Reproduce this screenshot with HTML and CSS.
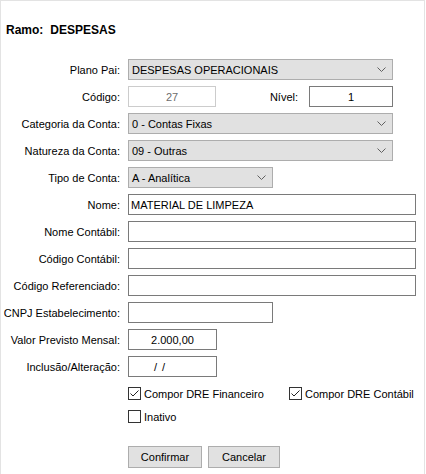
FILE: index.html
```html
<!DOCTYPE html>
<html lang="pt">
<head>
<meta charset="utf-8">
<link rel="stylesheet" href="styles.css">
</head>
<body>
<div class="window">
  <div class="title"><span>Ramo:</span><span class="title-value">DESPESAS</span></div>
  <div class="form">
    <label class="lbl">Plano Pai:</label>
    <div class="select w-full-select"><span>DESPESAS OPERACIONAIS</span><svg class="chev" width="9" height="5" viewBox="0 0 9 5"><path d="M0.5 0.5 L4.5 4.5 L8.5 0.5" fill="none" stroke="#606060" stroke-width="1"/></svg></div>

    <label class="lbl">Código:</label>
    <div class="split">
      <div class="input disabled w-codigo center">27</div>
      <label class="lbl nivel-lbl">Nível:</label>
      <div class="input w-nivel center">1</div>
    </div>

    <label class="lbl">Categoria da Conta:</label>
    <div class="select w-full-select"><span>0 - Contas Fixas</span><svg class="chev" width="9" height="5" viewBox="0 0 9 5"><path d="M0.5 0.5 L4.5 4.5 L8.5 0.5" fill="none" stroke="#606060" stroke-width="1"/></svg></div>

    <label class="lbl">Natureza da Conta:</label>
    <div class="select w-full-select"><span>09 - Outras</span><svg class="chev" width="9" height="5" viewBox="0 0 9 5"><path d="M0.5 0.5 L4.5 4.5 L8.5 0.5" fill="none" stroke="#606060" stroke-width="1"/></svg></div>

    <label class="lbl">Tipo de Conta:</label>
    <div class="select w-tipo"><span>A - Analítica</span><svg class="chev" width="9" height="5" viewBox="0 0 9 5"><path d="M0.5 0.5 L4.5 4.5 L8.5 0.5" fill="none" stroke="#606060" stroke-width="1"/></svg></div>

    <label class="lbl">Nome:</label>
    <div class="input w-full">MATERIAL DE LIMPEZA</div>

    <label class="lbl">Nome Contábil:</label>
    <div class="input w-full"></div>

    <label class="lbl">Código Contábil:</label>
    <div class="input w-full"></div>

    <label class="lbl">Código Referenciado:</label>
    <div class="input w-full"></div>

    <label class="lbl">CNPJ Estabelecimento:</label>
    <div class="input w-tipo"></div>

    <label class="lbl">Valor Previsto Mensal:</label>
    <div class="input w-valor center">2.000,00</div>

    <label class="lbl">Inclusão/Alteração:</label>
    <div class="input w-valor center date">/ /</div>
  </div>

  <div class="checks">
    <div class="check-row">
      <div class="check first"><span class="box"><svg width="11" height="11" viewBox="0 0 11 11"><path d="M1.5 5.5 L4 8 L9.5 2.5" fill="none" stroke="#222" stroke-width="1"/></svg></span><span>Compor DRE Financeiro</span></div>
      <div class="check"><span class="box"><svg width="11" height="11" viewBox="0 0 11 11"><path d="M1.5 5.5 L4 8 L9.5 2.5" fill="none" stroke="#222" stroke-width="1"/></svg></span><span>Compor DRE Contábil</span></div>
    </div>
    <div class="check-row">
      <div class="check"><span class="box"></span><span>Inativo</span></div>
    </div>
  </div>

  <div class="buttons">
    <div class="btn btn-confirm">Confirmar</div>
    <div class="btn btn-cancel">Cancelar</div>
  </div>
</div>
</body>
</html>
```

FILE: styles.css
```css
html, body {
  margin: 0;
  padding: 0;
  background: #ffffff;
}

body {
  font-family: "Liberation Sans", Arial, sans-serif;
  font-size: 11px;
  color: #000;
}

.window {
  width: 425px;
  height: 474px;
  box-sizing: border-box;
  border-top: 1px solid #e3e3e3;
  border-left: 1px solid #e3e3e3;
  border-right: 1px solid #e3e3e3;
  padding-top: 21px;
}

.title {
  padding-left: 5px;
  font-weight: bold;
  font-size: 12px;
  height: 16px;
  line-height: 16px;
  display: flex;
  gap: 7px;
}

.form {
  margin-top: 21px;
  display: grid;
  grid-template-columns: 114px 1fr;
  column-gap: 8px;
  row-gap: 6px;
  padding-left: 5px;
  grid-auto-rows: 21px;
}

.lbl {
  display: flex;
  align-items: center;
  justify-content: flex-end;
  white-space: nowrap;
  color: #000;
}

.split {
  display: flex;
  align-items: center;
  width: 265px;
}

.nivel-lbl {
  margin-left: auto;
  margin-right: 11px;
}

.select {
  box-sizing: border-box;
  height: 21px;
  background: #e1e1e1;
  border: 1px solid #adadad;
  display: flex;
  align-items: center;
  padding-left: 3px;
  padding-right: 6px;
  justify-content: space-between;
}

.chev {
  display: block;
}

.input {
  box-sizing: border-box;
  height: 21px;
  border: 1px solid #7a7a7a;
  background: #fff;
  display: flex;
  align-items: center;
  padding-left: 2px;
  white-space: nowrap;
}

.center {
  justify-content: center;
  padding-left: 0;
}

.date {
  padding-right: 26px;
  word-spacing: 2px;
}

.disabled {
  border-color: #cccccc;
  color: #6d6d6d;
}

.w-full-select { width: 265px; }
.w-full { width: 288px; }
.w-tipo { width: 145px; }
.w-codigo { width: 88px; }
.w-nivel { width: 84px; }
.w-valor { width: 89px; }

.checks {
  margin-top: 10px;
  padding-left: 127px;
  display: flex;
  flex-direction: column;
  gap: 10px;
}

.check-row {
  display: flex;
  height: 13px;
}

.check {
  display: flex;
  align-items: center;
  gap: 3px;
  height: 13px;
}

.check.first {
  width: 161px;
}

.box {
  box-sizing: border-box;
  width: 13px;
  height: 13px;
  border: 1px solid #333;
  background: #fff;
  display: flex;
  align-items: center;
  justify-content: center;
}

.box svg { display: block; }

.buttons {
  margin-top: 23px;
  padding-left: 127px;
  display: flex;
  gap: 6px;
}

.btn {
  box-sizing: border-box;
  height: 22px;
  background: #e1e1e1;
  border: 1px solid #adadad;
  display: flex;
  align-items: center;
  justify-content: center;
}

.btn-confirm { width: 74px; }
.btn-cancel { width: 72px; }
```
